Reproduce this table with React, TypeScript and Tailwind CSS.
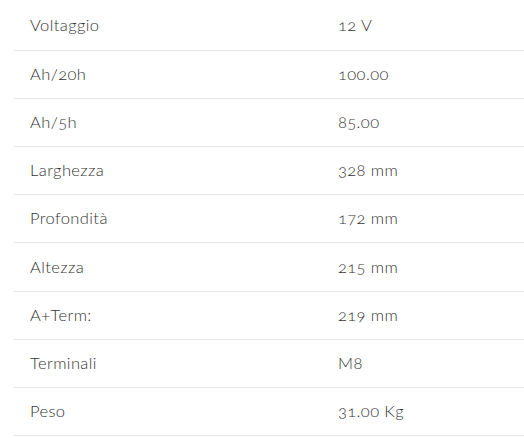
const specs = [
  ["Voltaggio", "12 V"],
  ["Ah/20h", "100.00"],
  ["Ah/5h", "85.00"],
  ["Larghezza", "328 mm"],
  ["Profondità", "172 mm"],
  ["Altezza", "215 mm"],
  ["A+Term:", "219 mm"],
  ["Terminali", "M8"],
  ["Peso", "31.00 Kg"],
]

export default function App() {
  return (
    <div
      className="w-[524px] h-[438px] bg-white overflow-hidden pt-[2px] pl-[14px]"
      style={{ fontFamily: '"Lato", "Open Sans", sans-serif', fontVariantNumeric: "oldstyle-nums" }}
    >
      <table className="w-full border-collapse text-[16.5px] font-light tracking-[0.4px] text-[#333]">
        <tbody>
          {specs.map(([label, value]) => (
            <tr key={label} className="h-[48.2px] border-b border-[#e6e6e6]">
              <td className="pl-4 w-[324px] align-middle">{label}</td>
              <td className="align-middle">{value}</td>
            </tr>
          ))}
        </tbody>
      </table>
    </div>
  )
}
